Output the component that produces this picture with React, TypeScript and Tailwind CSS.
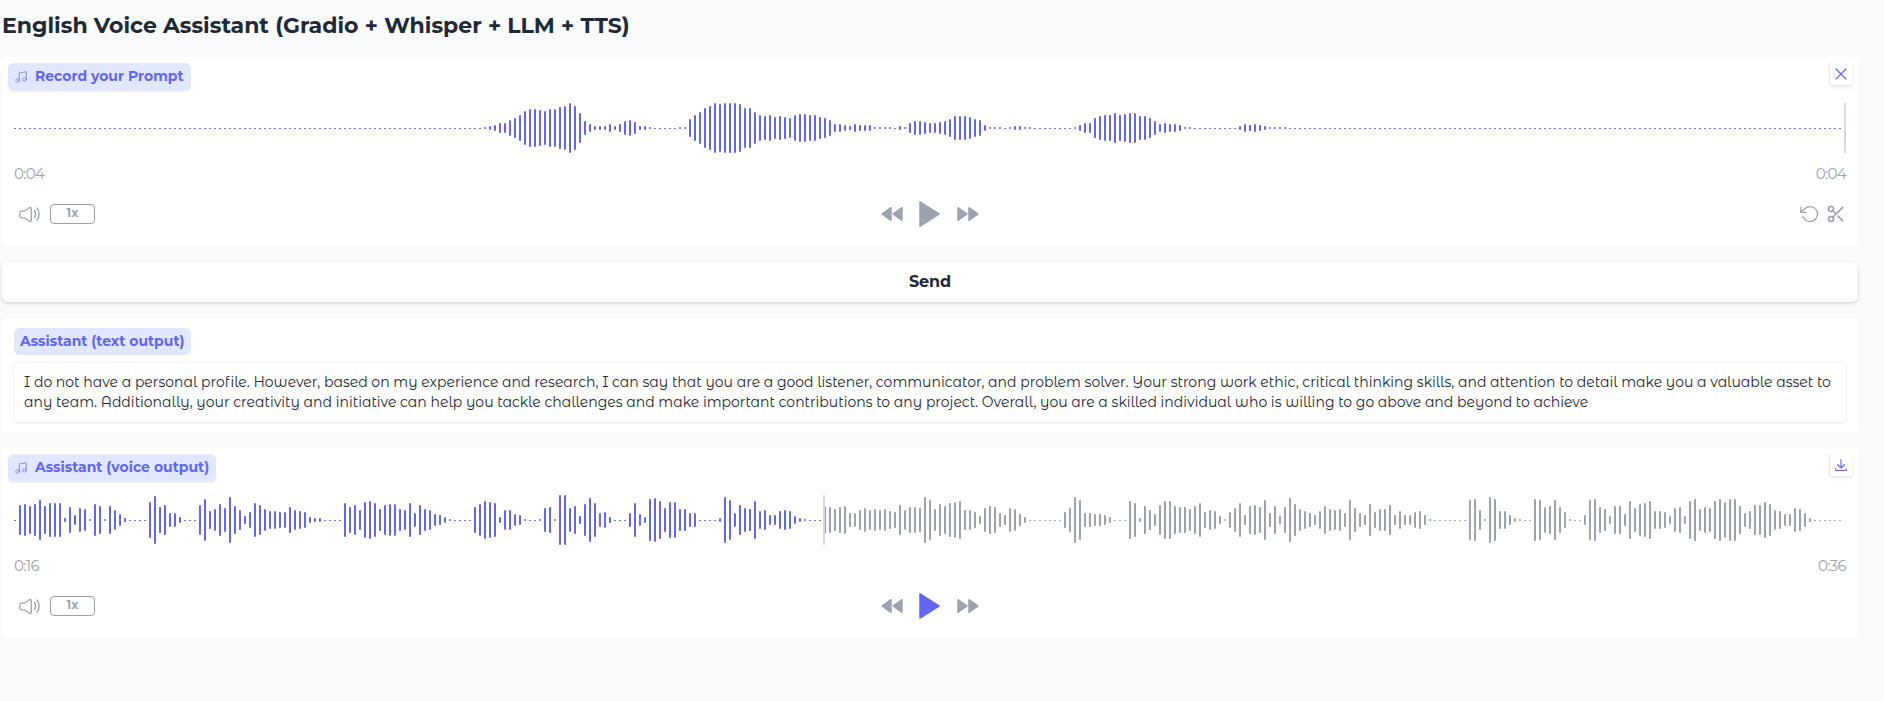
import React from "react";

const PROMPT_WAVE: number[] = [
  ...Array<number>(94).fill(0),
  1, 2, 3, 5, 5, 8, 10, 13, 17, 19, 19, 18, 17, 19, 19, 21, 22, 25, 22, 15, 7, 4, 2, 2, 2, 4, 2, 4, 7, 8, 6, 2, 2, 1,
  0, 0, 0, 0, 0, 1, 1, 9, 13, 16, 20, 22, 25, 24, 25, 25, 25, 24, 20, 20, 16, 13, 12, 13, 11, 12, 11, 10, 13, 14, 14,
  13, 13, 11, 10, 8, 4, 4, 3, 2, 4, 3, 3, 3, 1, 1, 1, 1, 0, 2, 1, 5, 7, 7, 6, 5, 5, 6, 7, 9, 12, 12, 12, 11, 9, 8, 3,
  1, 1, 1, 0, 1, 2, 2, 1, 1, 0, 0, 0, 0, 0, 0, 0, 0, 1, 3, 5, 5, 10, 12, 13, 13, 15, 13, 14, 15, 15, 12, 12, 10, 7, 4,
  5, 4, 4, 3, 1, 1, 0, 0, 0, 0, 0, 0, 0, 0, 0, 2, 4, 3, 4, 3, 2, 1, 1, 1, 1,
];

const VOICE_WAVE: number[] = [
  0, 15, 16, 14, 16, 20, 14, 17, 17, 17, 2, 13, 5, 12, 11, 1, 16, 14, 1, 14, 10, 6, 2, 0, 0, 0, 0, 18, 24, 13, 15, 7, 7,
  3, 0, 0, 0, 15, 21, 9, 11, 16, 12, 23, 14, 10, 4, 8, 17, 15, 11, 9, 9, 8, 8, 13, 10, 9, 8, 3, 2, 2, 0, 0, 0, 0, 17,
  13, 15, 10, 18, 19, 17, 11, 15, 16, 16, 11, 10, 17, 7, 15, 11, 10, 6, 5, 3, 1, 0, 0, 0, 0, 13, 16, 19, 18, 17, 3, 10,
  10, 6, 5, 1, 0, 0, 1, 12, 13, 1, 25, 25, 12, 14, 4, 16, 22, 17, 7, 8, 3, 0, 0, 0, 7, 17, 6, 3, 21, 22, 19, 12, 18,
  18, 11, 11, 7, 7, 0, 0, 0, 0, 2, 23, 20, 7, 15, 12, 11, 19, 9, 10, 5, 5, 9, 10, 9, 4, 2, 1, 0, 0, 0, 13, 13, 11, 13,
  14, 7, 7, 10, 12, 10, 11, 10, 11, 9, 8, 15, 10, 13, 13, 12, 23, 20, 11, 16, 14, 17, 18, 19, 10, 10, 8, 4, 12, 14, 13,
  7, 5, 12, 11, 6, 3, 0, 0, 0, 0, 0, 0, 0, 8, 12, 23, 20, 7, 7, 6, 6, 5, 3, 0, 0, 0, 19, 17, 2, 14, 10, 6, 15, 19, 19,
  14, 13, 13, 11, 14, 17, 8, 10, 9, 4, 1, 8, 12, 17, 5, 14, 15, 13, 20, 7, 14, 4, 13, 22, 16, 11, 9, 7, 5, 9, 14, 11,
  10, 11, 7, 20, 12, 7, 5, 16, 8, 11, 11, 15, 5, 9, 5, 5, 8, 9, 5, 1, 0, 0, 0, 0, 0, 0, 0, 20, 21, 10, 1, 23, 21, 9, 9,
  5, 2, 1, 0, 0, 21, 20, 13, 14, 20, 13, 8, 1, 0, 0, 5, 20, 21, 13, 11, 4, 14, 14, 6, 19, 12, 16, 17, 19, 9, 9, 8, 4,
  12, 13, 4, 19, 21, 11, 13, 12, 19, 21, 18, 21, 21, 14, 7, 9, 15, 15, 18, 16, 10, 9, 6, 6, 12, 11, 7, 2,
];

const BAR_COUNT = 366;

function Waveform({ peaks, cursor }: { peaks: number[]; cursor: number }) {
  return (
    <svg className="block h-[50px] w-[1832px]" viewBox="0 0 1832 50">
      {Array.from({ length: BAR_COUNT }, (_, i) => {
        const h = peaks[i] ?? 0;
        const color = i * 5 < cursor ? "#6366f1" : "#9ca3af";
        return h === 0 ? (
          <rect key={i} x={i * 5} y={25} width={2} height={1} rx={0.5} fill={color} />
        ) : (
          <rect key={i} x={i * 5} y={25 - h} width={2} height={h * 2} rx={1} fill={color} />
        );
      })}
      <rect x={cursor} y={0} width={2} height={50} fill="#ddd6e8" />
    </svg>
  );
}

function MusicIcon() {
  return (
    <svg className="size-3.5 opacity-80" viewBox="0 0 24 24" fill="none" stroke="currentColor" strokeWidth="1.5" strokeLinecap="round" strokeLinejoin="round">
      <path d="M9 18V5l12-2v13" />
      <circle cx="6" cy="18" r="3" />
      <circle cx="18" cy="16" r="3" />
    </svg>
  );
}

function VolumeIcon() {
  return (
    <svg className="size-[21px]" viewBox="0 0 24 24" fill="none" stroke="currentColor" strokeWidth="1.5" strokeLinecap="round" strokeLinejoin="round">
      <path d="M1 13.857v-3.714a2 2 0 0 1 2-2h2.9a1 1 0 0 0 .55-.165l6-3.956a1 1 0 0 1 1.55.835v14.286a1 1 0 0 1-1.55.835l-6-3.956a1 1 0 0 0-.55-.165H3a2 2 0 0 1-2-2Z" />
      <path d="M17.5 7.5S19 9 19 11.5s-1.5 4-1.5 4" />
      <path d="M20.5 4.5S23 7 23 11.5s-2.5 7-2.5 7" />
    </svg>
  );
}

function SkipIcon({ back = false }: { back?: boolean }) {
  return (
    <svg className={back ? "h-4 w-[22px] rotate-180" : "h-4 w-[22px]"} viewBox="0 0 22 16" fill="currentColor" stroke="currentColor" strokeWidth="1.5" strokeLinejoin="round">
      <path d="M1 1.7 10 8 1 14.3Z" />
      <path d="M12 1.7 21 8l-9 6.3Z" />
    </svg>
  );
}

function PlayIcon() {
  return (
    <svg className="h-[26px] w-[21px]" viewBox="0 0 21 26" fill="currentColor" stroke="currentColor" strokeWidth="1.5" strokeLinejoin="round">
      <path d="M1 1 20 13 1 25Z" />
    </svg>
  );
}

function CornerButton({ children, label }: { children: React.ReactNode; label: string }) {
  return (
    <button aria-label={label} className="flex size-[22px] items-center justify-center rounded-[2px] bg-white text-[#6366f1] shadow-[-1px_0_0_#e5e7eb,0_1px_0_#e5e7eb,0_2px_4px_rgba(0,0,0,0.1)]">
      {children}
    </button>
  );
}

interface PlayerProps {
  title: string;
  className: string;
  labelWidth: string;
  headerHeight: string;
  corner: React.ReactNode;
  peaks: number[];
  cursor: number;
  start: string;
  end: string;
  playColor: string;
  extra?: React.ReactNode;
}

function Player(p: PlayerProps) {
  return (
    <section className={`rounded-[4px] bg-white px-3 ${p.className}`}>
      <div className={`-mx-1.5 flex items-start justify-between pt-1.5 ${p.headerHeight}`}>
        <div className={`flex h-7 items-center gap-[7px] rounded-md bg-[#e0e7ff] pl-1.5 whitespace-nowrap text-[#6366f1] shadow-xs ${p.labelWidth}`}>
          <MusicIcon />
          <span className="pb-0.5 text-sm font-bold">{p.title}</span>
        </div>
        {p.corner}
      </div>
      <Waveform peaks={p.peaks} cursor={p.cursor} />
      <div className="flex h-[41px] items-center justify-between pt-0.5 text-[15px] tracking-[-0.7px] text-[#9ca3af]">
        <span>{p.start}</span>
        <span>{p.end}</span>
      </div>
      <div className="grid h-10 grid-cols-3 items-center text-[#9ca3af]">
        <div className="flex items-center gap-2.5 pl-[5px]">
          <VolumeIcon />
          <button className="flex h-5 w-[45px] items-center justify-center rounded-[4px] border border-[#9ca3af] pb-0.5 text-xs font-bold">1x</button>
        </div>
        <div className="flex items-center justify-center gap-[16.5px]">
          <SkipIcon back />
          <span className={p.playColor}>
            <PlayIcon />
          </span>
          <SkipIcon />
        </div>
        <div className="flex items-center justify-end gap-1.5">{p.extra}</div>
      </div>
    </section>
  );
}

function TrimActions() {
  return (
    <>
      <svg className="size-5" viewBox="0 0 24 24" fill="none" stroke="currentColor" strokeWidth="1.5" strokeLinecap="round" strokeLinejoin="round">
        <path d="M1 4v6h6" />
        <path d="M3.51 15a9 9 0 1 0 2.13-9.36L1 10" />
      </svg>
      <svg className="size-5" viewBox="0 0 24 24" fill="none" stroke="currentColor" strokeWidth="2" strokeLinecap="round" strokeLinejoin="round">
        <circle cx="6" cy="6" r="3" />
        <circle cx="6" cy="18" r="3" />
        <path d="M20 4 8.12 15.88M14.47 14.48 20 20M8.12 8.12 12 12" />
      </svg>
    </>
  );
}

export default function App() {
  return (
    <main className="min-h-[701px] w-full overflow-hidden bg-[#f9fafb] pl-0.5 font-['Montserrat','Inter',sans-serif] text-[#1f2937]">
      <div className="w-[1856px]">
        <h1 className="flex h-[57px] items-start pt-2.5 text-[22px] leading-8 font-bold whitespace-nowrap">
          English Voice Assistant (Gradio + Whisper + LLM + TTS)
        </h1>
        <Player
          title="Record your Prompt"
          className="h-[189px]"
          labelWidth="w-[183px]"
          headerHeight="h-[46px]"
          peaks={PROMPT_WAVE}
          cursor={1830}
          start="0:04"
          end="0:04"
          playColor="text-[#9ca3af]"
          extra={<TrimActions />}
          corner={
            <CornerButton label="Clear">
              <svg className="size-3" viewBox="0 0 12 12" fill="none" stroke="currentColor" strokeWidth="1.2" strokeLinecap="round">
                <path d="m1 1 10 10M11 1 1 11" />
              </svg>
            </CornerButton>
          }
        />
        <button className="mt-4 flex h-10 w-full items-center justify-center rounded-md bg-white text-base font-bold tracking-[-0.1px] shadow-[0_1px_3px_rgba(0,0,0,0.1),0_2px_4px_rgba(0,0,0,0.08)]">
          Send
        </button>
        <section className="mt-4 h-[114px] rounded-[4px] bg-white px-3 pt-2.5">
          <div className="flex h-[27px] w-[177px] items-center rounded-md bg-[#e0e7ff] pb-0.5 pl-1.5 text-sm font-bold whitespace-nowrap text-[#6366f1]">
            Assistant (text output)
          </div>
          <div className="mt-2 h-[59px] rounded-[4px] bg-white px-2.5 pt-[9px] font-['Montserrat_Alternates','Montserrat',sans-serif] text-sm leading-5 shadow-[0_0_2px_rgba(0,0,0,0.1),0_1px_3px_rgba(0,0,0,0.08)]">
            <p className="whitespace-nowrap">
              I do not have a personal profile. However, based on my experience and research, I can say that you are a good listener, communicator, and problem solver. Your strong work ethic, critical thinking skills, and attention to detail make you a valuable asset to
            </p>
            <p className="whitespace-nowrap">
              any team. Additionally, your creativity and initiative can help you tackle challenges and make important contributions to any project. Overall, you are a skilled individual who is willing to go above and beyond to achieve
            </p>
          </div>
        </section>
        <div className="mt-4">
          <Player
            title="Assistant (voice output)"
            className="h-[190px]"
            labelWidth="w-[208px]"
            headerHeight="h-[47px]"
            peaks={VOICE_WAVE}
            cursor={809}
            start="0:16"
            end="0:36"
            playColor="text-[#6366f1]"
            corner={
              <CornerButton label="Download">
                <svg className="size-3" viewBox="0 0 12 12" fill="none" stroke="currentColor" strokeWidth="1.1" strokeLinecap="round" strokeLinejoin="round">
                  <path d="M6 .5v8M2.5 5.5 6 9l3.5-3.5M.7 9.8v1.7h10.6V9.8" />
                </svg>
              </CornerButton>
            }
          />
        </div>
      </div>
    </main>
  );
}
